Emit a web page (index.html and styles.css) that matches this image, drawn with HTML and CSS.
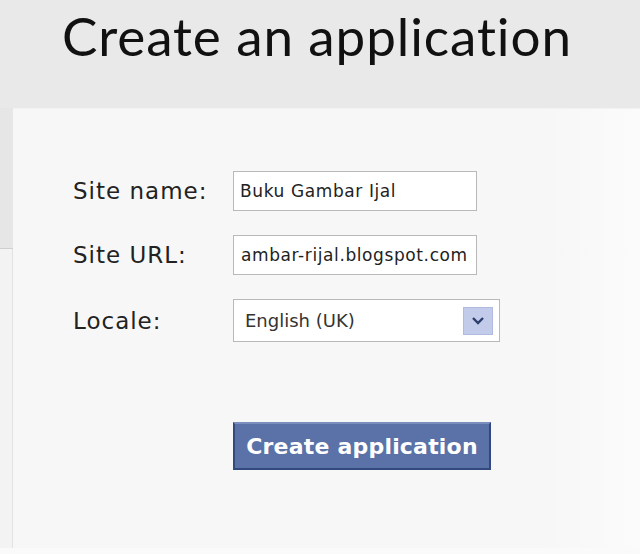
FILE: index.html
```html
<!DOCTYPE html>
<html>
<head>
    <title>Create an application</title>
    <link rel="stylesheet" href="styles.css">
</head>
<body>
    <div class="header">
        <h1>Create an application</h1>
    </div>
    <div class="main">
        <div class="side">
            <div class="side-top"></div>
            <div class="side-bottom"></div>
        </div>
        <div class="panel">
            <form class="app-form">
                <div class="form-row">
                    <label>Site name:</label>
                    <div class="field"><span>Buku Gambar Ijal</span></div>
                </div>
                <div class="form-row">
                    <label>Site URL:</label>
                    <div class="field field-url"><span>ambar-rijal.blogspot.com</span></div>
                </div>
                <div class="form-row">
                    <label>Locale:</label>
                    <div class="select">
                        <span>English (UK)</span>
                        <div class="select-btn">
                            <svg width="14" height="10" viewBox="0 0 14 10"><path d="M2 2 L7 7 L12 2" fill="none" stroke="#2b3f6e" stroke-width="2.4"/></svg>
                        </div>
                    </div>
                </div>
                <div class="button-row">
                    <button type="button" class="create-btn">Create application</button>
                </div>
            </form>
        </div>
    </div>
</body>
</html>
```

FILE: styles.css
```css
body {
    margin: 0;
    background: #fafafa;
    font-family: "DejaVu Sans", sans-serif;
}
.header {
    height: 108px;
    background: #e9e9e9;
    box-sizing: border-box;
    padding-left: 62px;
}
.header h1 {
    margin: 0;
    padding-top: 3px;
    font-family: "Lato", sans-serif;
    font-weight: normal;
    font-size: 53px;
    line-height: 66px;
    color: #111;
    letter-spacing: 0.9px;
}
.main {
    display: flex;
    height: 440px;
}
.side {
    width: 13px;
    display: flex;
    flex-direction: column;
}
.side-top {
    height: 140px;
    background: #e6e6e6;
    border-bottom: 1px solid #cfcfcf;
}
.side-bottom {
    flex: 1;
    background: #f3f3f3;
    border-right: 1px solid #e2e2e2;
}
.panel {
    flex: 1;
    background: linear-gradient(to right, #f7f7f7 85%, #fbfbfb);
    border-top: 1px solid #f2f2f2;
}
.app-form {
    padding: 62px 0 0 60px;
}
.form-row {
    display: flex;
    align-items: center;
    margin-bottom: 24px;
}
.form-row label {
    width: 160px;
    font-size: 23px;
    letter-spacing: 1px;
    color: #222;
}
.field {
    width: 244px;
    height: 40px;
    box-sizing: border-box;
    border: 1px solid #b9b9b9;
    background: #fff;
    display: flex;
    align-items: center;
    padding: 0 6px;
    white-space: nowrap;
    font-size: 17px;
    letter-spacing: 0.6px;
    color: #222;
}
.field-url {
    padding-left: 7px;
    letter-spacing: 0.6px;
}
.select {
    width: 267px;
    height: 43px;
    box-sizing: border-box;
    border: 1px solid #b9b9b9;
    background: #fff;
    display: flex;
    align-items: center;
    justify-content: space-between;
    padding: 0 6px 0 11px;
    font-size: 18px;
    color: #333;
}
.select-btn {
    width: 28px;
    height: 26px;
    background: #c3cbea;
    border: 1px solid #b0bbdf;
    display: flex;
    align-items: center;
    justify-content: center;
}
.button-row {
    padding: 56px 0 0 160px;
}
.create-btn {
    width: 258px;
    height: 48px;
    background: #5a72a8;
    border: 2px solid #32497d;
    border-top-color: #7b8fbe;
    color: #fff;
    font-family: "DejaVu Sans", sans-serif;
    font-weight: bold;
    font-size: 22px;
    letter-spacing: 0.2px;
    cursor: pointer;
}
```
